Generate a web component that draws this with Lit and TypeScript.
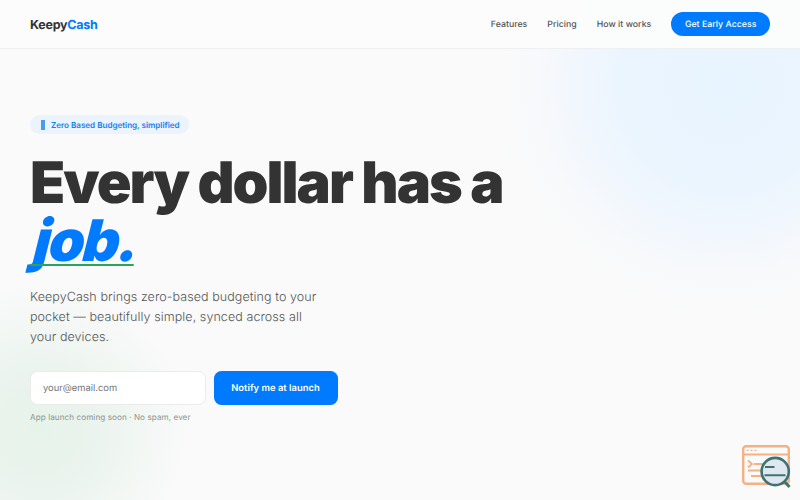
import { LitElement, css, html } from "lit";
import { customElement } from "lit/decorators.js";

@customElement("site-nav")
export class SiteNav extends LitElement {
    static styles = css`
        :host {
            display: block;
            position: relative;
        }

        .bar {
            box-sizing: border-box;
            height: 49px;
            padding: 0 30px;
            display: flex;
            align-items: center;
            justify-content: space-between;
            background-color: rgba(252, 252, 252, 0.93);
            border-bottom: 1px solid #eeeff1;
        }

        .logo {
            padding-top: 2px;
            font-size: 12.5px;
            font-weight: 700;
            letter-spacing: -0.25px;
            color: #333;
        }

        .logo span {
            color: #007aff;
        }

        .links {
            display: flex;
            align-items: center;
            gap: 20px;
            font-size: 8.75px;
            font-weight: 500;
            color: #555;
        }

        .links a {
            padding-top: 1px;
            line-height: 24px;
            letter-spacing: 0.02px;
        }

        .links .cta {
            box-sizing: border-box;
            height: 23.5px;
            padding: 1px 13.6px 0;
            border-radius: 12px;
            background-color: #007aff;
            color: #fff;
        }
    `

    render() {
        return html`
        <nav class="bar">
            <div class="logo">Keepy<span>Cash</span></div>
            <div class="links">
                <a>Features</a>
                <a>Pricing</a>
                <a>How it works</a>
                <a class="cta">Get Early Access</a>
            </div>
        </nav>
        `
    }
}

@customElement("notify-form")
export class NotifyForm extends LitElement {
    static styles = css`
        :host {
            display: block;
        }

        .row {
            display: flex;
            gap: 7.5px;
        }

        input, button {
            box-sizing: border-box;
            height: 33.5px;
            margin: 0;
            border-radius: 7.5px;
            font-family: inherit;
            font-size: 9.4px;
            text-rendering: inherit;
        }

        input {
            width: 176px;
            padding: 1px 12px 0;
            border: 1px solid #ebebeb;
            background-color: #fff;
            outline: none;
        }

        input::placeholder {
            color: #757575;
        }

        button {
            width: 124px;
            padding: 1px 0 0;
            border: none;
            background-color: #007aff;
            color: #fff;
            font-weight: 600;
            letter-spacing: 0.03px;
        }

        .note {
            margin: 6.5px 0 0;
            font-size: 8.125px;
            line-height: 12px;
            letter-spacing: 0.08px;
            color: #8e9290;
        }
    `

    render() {
        return html`
        <div class="row">
            <input type="email" placeholder="your@email.com">
            <button>Notify me at launch</button>
        </div>
        <p class="note">App launch coming soon · No spam, ever</p>
        `
    }
}

@customElement("inspect-badge")
export class InspectBadge extends LitElement {
    static styles = css`
        :host {
            display: block;
            width: 50px;
            height: 44px;
        }

        svg {
            display: block;
        }
    `

    render() {
        return html`
        <svg width="50" height="44" viewBox="0 0 50 44" fill="none">
            <rect x="2.2" y="2.2" width="45.6" height="37.6" rx="3" stroke="#f4b183" stroke-width="2.4"/>
            <path d="M2 10.6H48" stroke="#f4b183" stroke-width="2"/>
            <path d="M5.5 6.4h2M9.5 6.4h2M13.5 6.4h2" stroke="#f4b183" stroke-width="1.4"/>
            <path d="M7 16.5l4 3.5l-4 3.5M13 20h9M7 26.5h13M10 32h12" stroke="#f4b183" stroke-width="1.9"/>
            <circle cx="34.2" cy="27.5" r="13.6" fill="#dfe8f1" stroke="#3f7272" stroke-width="2.6"/>
            <path d="M24 23h9.5M23.5 31.2h21" stroke="#3f7272" stroke-width="2"/>
            <path d="M43.5 37.5l5 5.5" stroke="#3f7272" stroke-width="2.8"/>
        </svg>
        `
    }
}

@customElement("app-root")
export class AppRoot extends LitElement {
    static styles = css`
        :host {
            display: block;
            position: relative;
            width: 800px;
            height: 500px;
            overflow: hidden;
            background-color: #fafafa;
            font-family: Inter, "Liberation Sans", sans-serif;
            text-rendering: geometricPrecision;
        }

        .glow {
            position: absolute;
            border-radius: 50%;
        }

        .glow.blue {
            left: 495px;
            top: -145px;
            width: 460px;
            height: 460px;
            background: radial-gradient(circle closest-side, #e8f4ff 0%, #ebf5fe 45%, #f2f7fd 66%, #f7f9fb 82%, #fafafa 100%);
        }

        .glow.green {
            left: -110px;
            top: 280px;
            width: 300px;
            height: 300px;
            background: radial-gradient(circle closest-side, #e6f3ea 0%, #eaf3ed 35%, #f2f7f4 68%, #fafafa 100%);
        }

        .hero {
            position: relative;
            padding: 66px 30px 0;
        }

        .pill {
            display: flex;
            align-items: center;
            gap: 6px;
            box-sizing: border-box;
            width: fit-content;
            height: 19px;
            padding: 0 9px 0 11px;
            border-radius: 10px;
            background-color: #ebf4fd;
            color: #1a80ee;
            font-size: 8.125px;
            font-weight: 600;
            letter-spacing: -0.03px;
        }

        .pill i {
            width: 4px;
            height: 10px;
            background-color: #499bf0;
        }

        h1 {
            margin: 19.5px 0 0;
            font-size: 57.5px;
            font-weight: 900;
            line-height: 57.5px;
            letter-spacing: -1.98px;
            color: #333;
        }

        h1 em {
            position: relative;
            display: inline-block;
            font-style: normal;
            color: #007aff;
        }

        /* slants the upright face around its baseline */
        h1 em span {
            display: inline-block;
            transform: translateY(0.7px) skewX(-14deg);
            transform-origin: 0 86.4%;
        }

        h1 em::after {
            content: "";
            position: absolute;
            left: 0;
            right: 0;
            bottom: 2.5px;
            height: 2.5px;
            border-radius: 1px;
            background-color: #28a55c;
        }

        .lead {
            width: 300px;
            margin: 19.5px 0 23px;
            font-size: 12.5px;
            font-weight: 300;
            line-height: 20px;
            letter-spacing: 0.08px;
            color: #555;
        }

        inspect-badge {
            position: absolute;
            left: 741px;
            top: 444px;
        }
    `

    render() {
        return html`
        <div class="glow blue"></div>
        <div class="glow green"></div>
        <site-nav></site-nav>
        <main class="hero">
            <div class="pill"><i></i>Zero Based Budgeting, simplified</div>
            <h1>Every dollar has a<br><em><span>job.</span></em></h1>
            <p class="lead">KeepyCash brings zero-based budgeting to your pocket — beautifully simple, synced across all your devices.</p>
            <notify-form></notify-form>
        </main>
        <inspect-badge></inspect-badge>
        `
    }
}
